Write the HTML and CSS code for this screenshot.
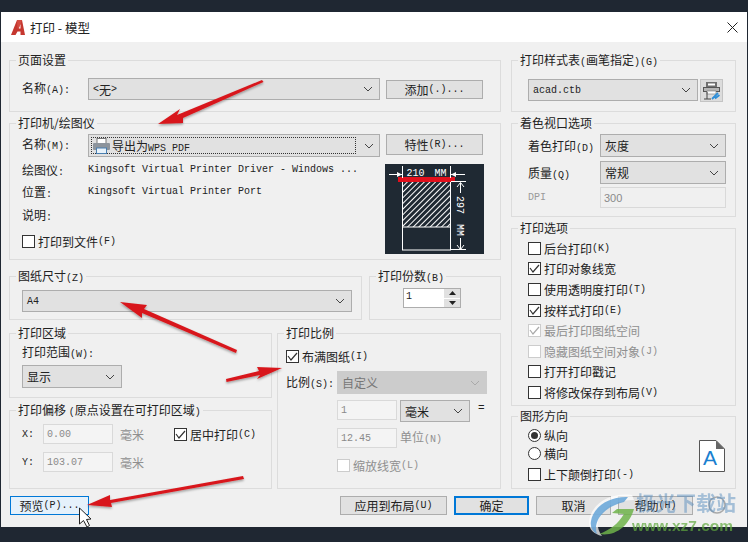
FILE: index.html
```html
<!DOCTYPE html>
<html lang="zh">
<head>
<meta charset="utf-8">
<title>打印 - 模型</title>
<link rel="stylesheet" href="styles.css">
</head>
<body>
<div class="dialog">
    <div class="titlebar">
        <svg class="app-logo" width="14" height="15" viewBox="0 0 14 15"><path d="M0 15 L6 0 H11 L14 15 H9.500 V11.500 H6.500 L4.500 15 Z M7.800 8.500 H9.500 V4 Z" fill="#c5372f" fill-rule="evenodd"/><path d="M6 0 H11 L9.500 4 L7.800 8.500 H6.500 Z" fill="#dd5a50" opacity=".6"/></svg>
        <span class="title">打印 - 模型</span>
        <svg class="close" width="11" height="11" viewBox="0 0 11 11"><path d="M.5 .5 L10.500 10.500 M10.500 .5 L.5 10.500" stroke="#222" stroke-width="1"/></svg>
    </div>

    <div class="content">
        <div class="main">
            <div class="col-left">
                <fieldset class="gb g-page">
                    <legend>页面设置</legend>
                    <div class="row row-page">
                        <span class="lbl w66">名称<span class="lat">(A):</span></span>
                        <div class="combo w292 h22"><span class="lat">&lt;</span>无<span class="lat">&gt;</span><svg class="chev" width="10" height="6" viewBox="0 0 10 6"><path d="M1 1 L5 5 L9 1" fill="none" stroke="#444"/></svg></div>
                        <div class="btn w97">添加<span class="lat">(.)...</span></div>
                    </div>
                </fieldset>

                <fieldset class="gb g-printer">
                    <legend>打印机/绘图仪</legend>
                    <div class="row row-printer">
                        <span class="lbl w66">名称<span class="lat">(M):</span></span>
                        <div class="combo w292 h23 focus">
                            <span class="focus-line">
                                <svg class="printer" width="17" height="16" viewBox="0 0 17 16"><rect x="4" y=".5" width="9" height="5" fill="#fff" stroke="#777"/><rect x="0" y="5" width="17" height="7" rx="1" fill="#8d949c"/><rect x="3.500" y="10" width="10" height="5.500" fill="#e8f2fa" stroke="#4a7fb0"/></svg>
                                <span class="focus-txt">导出为<span class="lat">WPS PDF</span></span>
                            </span>
                            <svg class="chev" width="10" height="6" viewBox="0 0 10 6"><path d="M1 1 L5 5 L9 1" fill="none" stroke="#444"/></svg>
                        </div>
                        <div class="btn w97 up">特性<span class="lat">(R)...</span></div>
                    </div>
                    <div class="printer-lower">
                        <div class="info">
                            <div class="info-row"><span class="lbl w66">绘图仪<span class="lat">:</span></span><span class="lat">Kingsoft Virtual Printer Driver - Windows ...</span></div>
                            <div class="info-row"><span class="lbl w66">位置<span class="lat">:</span></span><span class="lat">Kingsoft Virtual Printer Port</span></div>
                            <div class="info-row"><span class="lbl w66">说明<span class="lat">:</span></span></div>
                            <label class="check file-check"><span class="box"></span>打印到文件<span class="lat">(F)</span></label>
                        </div>
                        <svg class="sheet" width="99" height="90" viewBox="0 0 99 90">
                            <defs>
                                <pattern id="hatch" width="4" height="4" patternUnits="userSpaceOnUse" patternTransform="rotate(45)">
                                    <rect width="1" height="4" fill="#fff"/>
                                </pattern>
                            </defs>
                            <rect width="99" height="90" fill="#1f2933"/>
                            <rect x="17.500" y="15" width="48" height="48" fill="url(#hatch)"/>
                            <rect x="17.500" y="15" width="48" height="71" fill="none" stroke="#fff"/>
                            <path d="M17.500 63 H65.500" stroke="#fff"/>
                            <rect x="13" y="13" width="57" height="5" fill="#e2101c"/>
                            <path d="M17.500 2 V14 M65.500 2 V14 M4 10.500 H17 M66 10.500 H80 M75.500 19 V29 M75.500 74 V85 M66 17.500 H81 M66 85.500 H81 M72 23 L75.500 18.500 L79 23 M72 81 L75.500 85.500 L79 81" stroke="#fff" fill="none"/>
                            <path d="M12 8 L17 10.500 L12 13 Z M71 8 L66 10.500 L71 13 Z" fill="#fff"/>
                            <text class="sheet-txt" x="41.500" y="12" text-anchor="middle">210 MM</text>
                            <text class="sheet-txt" transform="translate(72 52) rotate(90)" text-anchor="middle">297 MM</text>
                        </svg>
                    </div>
                </fieldset>

                <div class="paper-row">
                    <fieldset class="gb g-paper">
                        <legend>图纸尺寸<span class="lat">(Z)</span></legend>
                        <div class="paper-body">
                            <div class="combo w330 h22"><span class="lat">A4</span><svg class="chev" width="10" height="6" viewBox="0 0 10 6"><path d="M1 1 L5 5 L9 1" fill="none" stroke="#444"/></svg></div>
                        </div>
                    </fieldset>
                    <fieldset class="gb g-copies">
                        <legend>打印份数<span class="lat">(B)</span></legend>
                        <div class="spin">
                            <span class="spin-val lat">1</span>
                            <span class="spin-btns">
                                <span class="spin-btn"><svg width="7" height="4" viewBox="0 0 7 4"><path d="M3.500 0 L7 4 H0 Z" fill="#222"/></svg></span>
                                <span class="spin-btn"><svg width="7" height="4" viewBox="0 0 7 4"><path d="M0 0 H7 L3.500 4 Z" fill="#222"/></svg></span>
                            </span>
                        </div>
                    </fieldset>
                </div>

                <div class="lower-row">
                    <div class="lower-left">
                        <fieldset class="gb g-area">
                            <legend>打印区域</legend>
                            <div class="area-body">
                                <div class="area-lbl">打印范围<span class="lat">(W):</span></div>
                                <div class="combo w100 h23">显示<svg class="chev" width="10" height="6" viewBox="0 0 10 6"><path d="M1 1 L5 5 L9 1" fill="none" stroke="#444"/></svg></div>
                            </div>
                        </fieldset>
                        <fieldset class="gb g-offset">
                            <legend>打印偏移 <span class="lat">(</span>原点设置在可打印区域<span class="lat">)</span></legend>
                            <div class="offset-row">
                                <span class="lat axis">X:</span>
                                <span class="field w70 lat">0.00</span>
                                <span class="unit">毫米</span>
                                <label class="check center-check"><span class="box on"><svg width="11" height="9" viewBox="0 0 11 9"><path d="M1 4 L4 8 L10 1" fill="none" stroke="#333" stroke-width="1.200"/></svg></span>居中打印<span class="lat">(C)</span></label>
                            </div>
                            <div class="offset-row second">
                                <span class="lat axis">Y:</span>
                                <span class="field w70 lat">103.07</span>
                                <span class="unit">毫米</span>
                            </div>
                        </fieldset>
                    </div>
                    <fieldset class="gb g-scale">
                        <legend>打印比例</legend>
                        <label class="check fit-check"><span class="box on"><svg width="11" height="9" viewBox="0 0 11 9"><path d="M1 4 L4 8 L10 1" fill="none" stroke="#333" stroke-width="1.200"/></svg></span>布满图纸<span class="lat">(I)</span></label>
                        <div class="scale-row">
                            <span class="scale-lbl">比例<span class="lat">(S):</span></span>
                            <div class="combo off w150 h23">自定义<svg class="chev" width="10" height="6" viewBox="0 0 10 6"><path d="M1 1 L5 5 L9 1" fill="none" stroke="#aaa"/></svg></div>
                        </div>
                        <div class="scale-sub s1">
                            <span class="field w60 lat">1</span>
                            <div class="combo w70 h22 small">毫米<svg class="chev" width="10" height="6" viewBox="0 0 10 6"><path d="M1 1 L5 5 L9 1" fill="none" stroke="#444"/></svg></div>
                            <span class="lat eq">=</span>
                        </div>
                        <div class="scale-sub s2">
                            <span class="field w60 lat">12.45</span>
                            <span class="unit u-n">单位<span class="lat">(N)</span></span>
                        </div>
                        <label class="check disabled lw-check"><span class="box"></span>缩放线宽<span class="lat">(L)</span></label>
                    </fieldset>
                </div>
            </div>

            <div class="col-right">
                <fieldset class="gb g-page">
                    <legend>打印样式表<span class="lat">(</span>画笔指定<span class="lat">)(G)</span></legend>
                    <div class="row row-style">
                        <div class="combo w170 h22"><span class="lat">acad.ctb</span><svg class="chev" width="10" height="6" viewBox="0 0 10 6"><path d="M1 1 L5 5 L9 1" fill="none" stroke="#444"/></svg></div>
                        <div class="icon-btn">
                            <svg width="17" height="19" viewBox="0 0 17 19"><rect x="3" y="1" width="11" height="5" fill="#6f6f6f"/><rect x="5" y="2.500" width="7" height="2" fill="#fff"/><rect x=".5" y="6.500" width="16" height="4" fill="#b5b5b5" stroke="#555"/><rect x="4" y="10" width="9" height="3" fill="#fff" stroke="#777" stroke-width=".6"/><path d="M4 11 V18 H1 M4 18 H8" stroke="#444" fill="none"/><path d="M9 18 L15 12 M12 17.500 L16.500 14" stroke="#2f8fd8" stroke-width="1.800"/></svg>
                        </div>
                    </div>
                </fieldset>

                <fieldset class="gb g-shade">
                    <legend>着色视口选项</legend>
                    <div class="shade-row r1"><span class="shade-lbl">着色打印<span class="lat">(D)</span></span><div class="combo w126 h23">灰度<svg class="chev" width="10" height="6" viewBox="0 0 10 6"><path d="M1 1 L5 5 L9 1" fill="none" stroke="#444"/></svg></div></div>
                    <div class="shade-row r2"><span class="shade-lbl">质量<span class="lat">(Q)</span></span><div class="combo w126 h23">常规<svg class="chev" width="10" height="6" viewBox="0 0 10 6"><path d="M1 1 L5 5 L9 1" fill="none" stroke="#444"/></svg></div></div>
                    <div class="shade-row r3"><span class="shade-lbl lat muted">DPI</span><span class="field w126 dpi">300</span></div>
                </fieldset>

                <fieldset class="gb g-options">
                    <legend>打印选项</legend>
                    <label class="check opt"><span class="box"></span>后台打印<span class="lat">(K)</span></label>
                    <label class="check opt"><span class="box on"><svg width="11" height="9" viewBox="0 0 11 9"><path d="M1 4 L4 8 L10 1" fill="none" stroke="#333" stroke-width="1.200"/></svg></span>打印对象线宽</label>
                    <label class="check opt"><span class="box"></span>使用透明度打印<span class="lat">(T)</span></label>
                    <label class="check opt"><span class="box on"><svg width="11" height="9" viewBox="0 0 11 9"><path d="M1 4 L4 8 L10 1" fill="none" stroke="#333" stroke-width="1.200"/></svg></span>按样式打印<span class="lat">(E)</span></label>
                    <label class="check opt disabled"><span class="box on"><svg width="11" height="9" viewBox="0 0 11 9"><path d="M1 4 L4 8 L10 1" fill="none" stroke="#aaa" stroke-width="1.200"/></svg></span>最后打印图纸空间</label>
                    <label class="check opt disabled"><span class="box"></span>隐藏图纸空间对象<span class="lat">(J)</span></label>
                    <label class="check opt"><span class="box"></span>打开打印戳记</label>
                    <label class="check opt"><span class="box"></span>将修改保存到布局<span class="lat">(V)</span></label>
                </fieldset>

                <fieldset class="gb g-orient">
                    <legend>图形方向</legend>
                    <div class="orient-body">
                        <div class="orient-list">
                            <label class="check o1"><span class="radio on"></span>纵向</label>
                            <label class="check o2"><span class="radio"></span>横向</label>
                            <label class="check o3"><span class="box"></span>上下颠倒打印<span class="lat">(-)</span></label>
                        </div>
                        <div class="page-icon">
                            <svg class="page-svg" width="26" height="32" viewBox="0 0 26 32"><path d="M.5 .5 H17 L25.500 9 V31.500 H.5 Z" fill="#fff" stroke="#555"/><path d="M17 .5 L25.500 9 H17 Z" fill="#666"/></svg>
                            <span class="page-a">A</span>
                        </div>
                    </div>
                </fieldset>
            </div>
        </div>

        <div class="footer">
            <div class="btn preview">预览<span class="lat">(P)...</span></div>
            <div class="footer-right">
                <div class="btn apply">应用到布局<span class="lat">(U)</span></div>
                <div class="btn ok">确定</div>
                <div class="btn w75">取消</div>
                <div class="btn w75">帮助<span class="lat">(H)</span></div>
            </div>
        </div>
    </div>
</div>

<!-- annotations drawn over the dialog -->
<svg class="marks" width="748" height="542" viewBox="0 0 748 542">
    <defs>
        <filter id="soft" x="-10%" y="-30%" width="120%" height="170%">
            <feDropShadow dx="0" dy="1.500" stdDeviation="1" flood-color="#000" flood-opacity=".35"/>
        </filter>
    </defs>
    <g fill="#d8191c" filter="url(#soft)">
        <path d="M158 124 L180 109 L177 115 L262 80 L263.500 82 L183 118 L183 123 Z"/>
        <path d="M120 302 L147 305 L144 309 L237 350 L236 353 L142 313 L142 318 Z"/>
        <path d="M282 368 L257 367 L259 371 L226 379 L226.500 382 L260 375 L257 379 Z"/>
        <path d="M87 505 L110 495 L110 500 L243 476 L244 479 L111 503 L112 507 Z"/>
    </g>
    <path d="M79.500 508 V524 L83.500 520.500 L87 527 L89.500 525.500 L86.500 519.500 L91 519 Z" fill="#fff" stroke="#222"/>
    <g class="wm">
        <path d="M632 495 C608 492 590 506 589 522 C589 530 594 534 602 536 C596 528 596 518 604 510 C610 504 620 500 634 500 Z" fill="#fff" opacity=".7"/>
        <path d="M628 497 C608 496 593 508 591 521 C590 527 592 531 597 534 C593 524 600 508 624 502 Z" fill="#5b9fd6" opacity=".8"/>
        <path d="M599 534 C615 537 629 526 634 509 L617 509 L612 513 L624 514 C618 524 610 530 599 534 Z" fill="#6fb34a" opacity=".85"/>
        <circle cx="717" cy="505" r="8" fill="none" stroke="#8a8a8a" stroke-width="1.500" opacity=".7"/>
        <text class="wm-title" x="636" y="511">极光下载站</text>
        <text class="wm-url" x="632" y="531">www.xz7.com</text>
    </g>
</svg>
</body>
</html>
```

FILE: styles.css
```css
* {
    box-sizing: border-box;
}
html, body {
    margin: 0;
    height: 542px;
    overflow: hidden;
}
body {
    background: #1f2732;
    font-family: "Noto Sans CJK SC", "Liberation Sans", sans-serif;
    font-size: 12px;
    color: #222222;
    position: relative;
}
.lat {
    font-family: "Liberation Mono", "Noto Sans CJK SC", monospace;
    font-size: 10px;
}
.dialog {
    margin: 12px 1px 0 1px;
    height: 515px;
    background: #f0f0f0;
}
.titlebar {
    height: 30px;
    background: #ffffff;
    display: flex;
    align-items: center;
    padding: 0 9px 0 10px;
}
.app-logo {
    margin-right: 5px;
}
.title {
    font-size: 12.500px;
    flex: 1;
}
.content {
    padding: 10px 0 0 8px;
}
.main {
    display: flex;
    gap: 10px;
}
.col-left {
    width: 492px;
}
.col-right {
    width: 225px;
}

/* group boxes */
.gb {
    margin: 0;
    padding: 0;
    border: 1px solid #dcdcdc;
    min-width: 0;
}
.gb legend {
    margin-left: 6px;
    padding: 0 2px;
    line-height: 16px;
    height: 16px;
    white-space: nowrap;
}
.g-page {
    height: 60px;
    margin-bottom: 3px;
}
.g-printer {
    height: 145px;
    margin-bottom: 8px;
}
.row {
    display: flex;
    align-items: center;
    padding-left: 12px;
}
.row-page {
    padding-top: 10px;
}
.row-printer {
    padding-top: 3px;
}
.row-style {
    padding: 10px 0 0 16px;
    gap: 2px;
}
.lbl {
    flex: none;
}
.row .lbl {
    margin-bottom: 4px;
}
.w66 { width: 66px; }
.w60 { width: 60px; }
.w70 { width: 70px; }
.w75 { width: 75px; }
.w97 { width: 97px; }
.w100 { width: 100px; }
.w126 { width: 126px; }
.w150 { width: 150px; }
.w170 { width: 170px; }
.w292 { width: 292px; }
.w330 { width: 330px; }
.h22 { height: 22px; }
.h23 { height: 23px; }

/* dropdowns, buttons, fields */
.combo {
    flex: none;
    display: flex;
    align-items: center;
    background: #e1e1e1;
    border: 1px solid #adadad;
    padding: 0 6px 0 4px;
    white-space: nowrap;
    position: relative;
}
.chev {
    margin-left: auto;
    flex: none;
}
.combo.off {
    background: #cccccc;
    border-color: #cccccc;
    color: #777777;
}
.combo.focus {
    padding: 2px 5px 2px 2px;
}
.focus-line {
    flex: 1;
    align-self: stretch;
    display: flex;
    align-items: center;
    border: 1px dotted #333333;
    margin-right: 8px;
    padding-left: 1px;
    gap: 2px;
}
.printer {
    flex: none;
}
.btn {
    height: 19px;
    background: #e1e1e1;
    border: 1px solid #adadad;
    display: flex;
    align-items: center;
    justify-content: center;
    white-space: nowrap;
    flex: none;
}
.row-page .btn {
    margin-left: 6px;
}
.row-printer .btn {
    margin-left: 6px;
    height: 21px;
    margin-top: -2px;
}
.field {
    flex: none;
    display: flex;
    align-items: center;
    height: 20px;
    background: #f4f4f4;
    border: 1px solid #d9d9d9;
    padding-left: 3px;
    color: #8a8a8a;
    font-size: 10px;
}
.dpi {
    height: 21px;
    font-family: "Liberation Sans", sans-serif;
    font-size: 11px;
    background: #f0f0f0;
}
.unit {
    color: #8f8f8f;
    margin-left: 7px;
}
.icon-btn {
    width: 23px;
    height: 23px;
    background: #dcdcdc;
    border: 1px solid #c4c4c4;
    display: flex;
    align-items: center;
    justify-content: center;
    margin-top: 1px;
}

/* check and radio */
.check {
    display: flex;
    align-items: center;
    white-space: nowrap;
}
.box {
    width: 13px;
    height: 13px;
    background: #ffffff;
    border: 1px solid #333333;
    margin-right: 3px;
    flex: none;
    display: flex;
    align-items: center;
    justify-content: center;
}
.radio {
    width: 13px;
    height: 13px;
    border: 1px solid #333333;
    border-radius: 50%;
    background: #ffffff;
    margin-right: 3px;
    flex: none;
    display: flex;
    align-items: center;
    justify-content: center;
}
.radio.on::after {
    content: "";
    width: 7px;
    height: 7px;
    border-radius: 50%;
    background: #333333;
}
.disabled {
    color: #8f8f8f;
}
.disabled .box {
    border-color: #cccccc;
}

/* printer group */
.printer-lower {
    display: flex;
    align-items: flex-start;
}
.info {
    width: 375px;
    padding: 1px 0 0 12px;
}
.info-row {
    display: flex;
    align-items: center;
    height: 22.500px;
}
.file-check {
    margin-top: 7px;
}
.sheet {
    margin-top: 7px;
    flex: none;
}
.sheet-txt {
    fill: #ffffff;
    font-family: "Liberation Mono", monospace;
    font-size: 10px;
    word-spacing: 4px;
}

/* paper and copies */
.paper-row {
    display: flex;
    gap: 7px;
    height: 52px;
    margin-bottom: 5px;
}
.g-paper {
    width: 353px;
}
.paper-body {
    padding: 6px 0 0 12px;
}
.g-copies {
    width: 132px;
}
.spin {
    display: flex;
    width: 58px;
    height: 20px;
    margin: 4px 0 0 33px;
    background: #ffffff;
    border: 1px solid #adadad;
}
.spin-val {
    flex: 1;
    padding: 2px 0 0 2px;
}
.spin-btns {
    width: 16px;
    display: flex;
    flex-direction: column;
    gap: 1px;
}
.spin-btn {
    flex: 1;
    background: #e1e1e1;
    display: flex;
    align-items: center;
    justify-content: center;
}

/* lower left */
.lower-row {
    display: flex;
    gap: 5px;
}
.lower-left {
    width: 263px;
}
.g-area {
    height: 73px;
    margin-bottom: 4px;
}
.area-body {
    padding: 3px 0 0 12px;
}
.area-lbl {
    height: 16px;
    line-height: 16px;
    margin-bottom: 5px;
}
.g-offset {
    height: 87px;
}
.offset-row {
    display: flex;
    align-items: center;
    padding: 6px 0 0 12px;
}
.offset-row.second {
    padding-top: 8px;
}
.axis {
    width: 21px;
}
.center-check {
    margin-left: 30px;
}

/* scale */
.g-scale {
    width: 224px;
    height: 164px;
}
.fit-check {
    margin: 7px 0 0 8px;
}
.scale-row {
    display: flex;
    align-items: center;
    padding-left: 8px;
    margin-top: 6px;
}
.scale-lbl {
    width: 51px;
    margin-bottom: 3px;
}
.scale-sub {
    display: flex;
    align-items: flex-start;
    padding-left: 59px;
}
.s1 {
    margin-top: 6px;
    gap: 3px;
}
.s2 {
    margin-top: 6px;
}
.eq {
    margin: 2px 0 0 5px;
    font-size: 11px;
}
.u-n {
    margin-left: 3px;
}
.lw-check {
    margin: 9px 0 0 59px;
}

/* shading */
.g-shade {
    height: 102px;
    margin-bottom: 3px;
}
.shade-row {
    display: flex;
    align-items: center;
    padding-left: 16px;
}
.shade-lbl {
    width: 72px;
}
.muted {
    color: #9a9a9a;
}
.r1 {
    margin-top: 3px;
}
.r2 {
    margin-top: 4px;
}
.r3 {
    margin-top: 3px;
}

/* options */
.g-options {
    height: 186px;
    margin-bottom: 2px;
    padding-top: 2px;
}
.opt {
    height: 20.600px;
    padding-left: 16px;
}

/* orientation */
.g-orient {
    height: 81px;
}
.orient-body {
    display: flex;
    justify-content: space-between;
    padding: 2px 10px 0 16px;
}
.o1, .o2 {
    height: 18px;
}
.o3 {
    height: 21px;
    margin-top: 2px;
}
.page-icon {
    position: relative;
    width: 26px;
    height: 32px;
    margin-top: 14px;
}
.page-svg {
    display: block;
}
.page-a {
    position: absolute;
    left: 4px;
    top: 6px;
    font-family: "Liberation Sans", sans-serif;
    font-size: 21px;
    line-height: 24px;
    color: #1a7fd0;
}

/* footer */
.footer {
    display: flex;
    justify-content: space-between;
    margin-top: 7px;
}
.preview {
    margin-left: 1px;
    width: 79px;
    background: #e5f1fb;
    border-color: #0078d7;
}
.footer-right {
    display: flex;
    gap: 7px;
    padding-right: 54px;
}
.apply {
    width: 107px;
}
.ok {
    width: 75px;
    border: 2px solid #0078d7;
}

/* annotations */
.marks {
    position: absolute;
    left: 0;
    top: 0;
    pointer-events: none;
}
.wm-title {
    font-size: 20px;
    font-weight: 700;
    fill: #5b8fbf;
    opacity: .5;
}
.wm-url {
    font-family: "Liberation Sans", sans-serif;
    font-size: 15.500px;
    font-weight: 700;
    fill: #5fa83e;
    opacity: .7;
}
```
